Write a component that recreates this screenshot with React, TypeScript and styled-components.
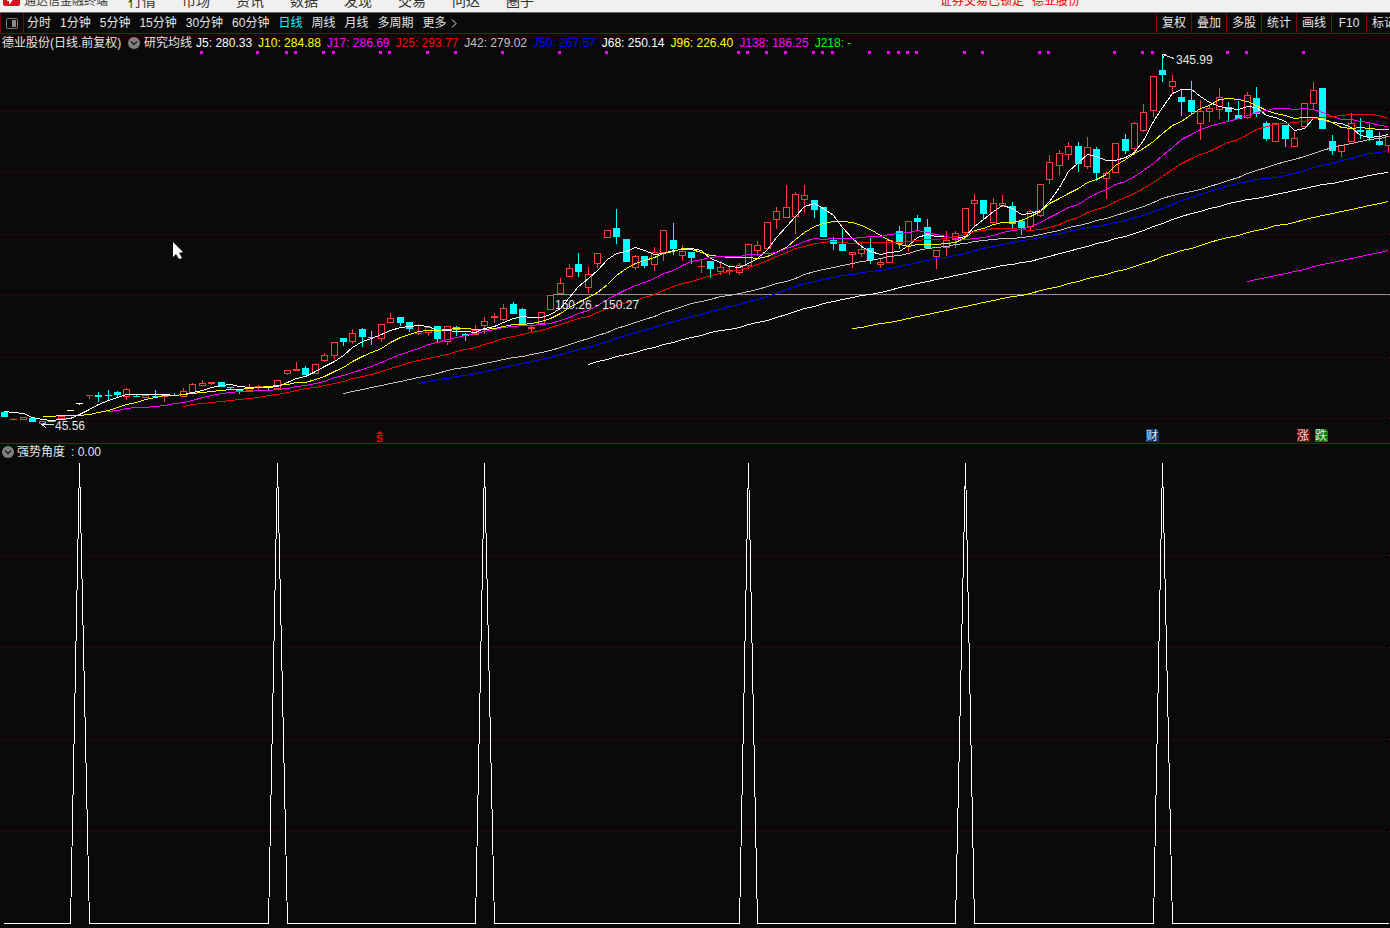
import React, { useState } from "react";
import styled, { createGlobalStyle } from "styled-components";

const GlobalStyle = createGlobalStyle`
  * { box-sizing: border-box; }
  body {
    margin: 0;
    background: #0a0a0a;
    color: #e4e4e4;
    font-family: "Liberation Sans", "Noto Sans CJK SC", sans-serif;
    font-size: 12px;
    line-height: 16px;
    overflow-x: hidden;
  }
  button { font: inherit; border: 0; padding: 0; background: none; cursor: pointer; }
`;

/* ---------- data ---------- */

type Kind = "u" | "d" | "w";
// kind, body top, body bottom, high, low
type Candle = [Kind, number, number, number, number];

const candles: Candle[] = [
  ["d", 412, 417, 412, 417], ["u", 419, 420, 418, 420], ["u", 417, 420, 417, 420], ["d", 418, 422, 418, 422],
  ["u", 421, 424, 421, 424], ["d", 421, 422, 421, 422], ["u", 416, 419, 416, 419], ["w", 410, 411, 410, 411],
  ["w", 403, 404, 403, 405], ["u", 395, 396, 395, 399], ["d", 395, 397, 392, 402], ["d", 395, 396, 390, 401],
  ["d", 392, 395, 391, 398], ["u", 389, 397, 388, 400], ["d", 396, 397, 394, 397], ["u", 395, 398, 395, 398],
  ["d", 396, 397, 390, 397], ["u", 395, 397, 395, 402], ["d", 395, 396, 393, 396], ["u", 391, 397, 388, 397],
  ["u", 384, 393, 383, 393], ["u", 383, 386, 380, 386], ["u", 382, 384, 382, 385], ["d", 382, 387, 382, 387],
  ["d", 387, 388, 387, 390], ["d", 390, 391, 389, 394], ["u", 388, 391, 384, 391], ["u", 386, 388, 385, 391],
  ["d", 386, 387, 386, 390], ["u", 380, 389, 380, 389], ["u", 370, 374, 370, 375], ["u", 369, 371, 362, 371],
  ["d", 368, 375, 366, 375], ["u", 364, 374, 364, 374], ["u", 355, 361, 353, 362], ["u", 342, 356, 342, 359],
  ["d", 338, 342, 338, 346], ["u", 333, 342, 329, 344], ["d", 329, 337, 328, 347], ["d", 337, 338, 331, 345],
  ["u", 324, 339, 324, 342], ["u", 318, 323, 313, 323], ["d", 317, 323, 317, 326], ["d", 322, 329, 322, 332],
  ["u", 333, 334, 324, 335], ["u", 327, 333, 327, 336], ["d", 326, 339, 326, 343], ["u", 326, 342, 326, 345],
  ["d", 327, 330, 326, 336], ["d", 334, 336, 333, 341], ["u", 330, 335, 325, 335], ["u", 321, 326, 317, 334],
  ["u", 316, 318, 313, 323], ["u", 308, 320, 304, 321], ["d", 304, 314, 302, 314], ["d", 309, 324, 308, 326],
  ["u", 327, 329, 325, 333], ["u", 312, 324, 312, 324], ["u", 295, 310, 295, 310], ["u", 283, 294, 278, 294],
  ["u", 268, 277, 264, 277], ["d", 264, 272, 253, 277], ["u", 274, 288, 267, 293], ["u", 253, 264, 253, 268],
  ["u", 230, 238, 230, 238], ["d", 228, 237, 209, 244], ["d", 239, 262, 239, 262], ["u", 256, 268, 255, 270],
  ["d", 256, 266, 256, 268], ["u", 252, 265, 247, 271], ["u", 230, 253, 230, 261], ["d", 240, 249, 223, 255],
  ["u", 251, 256, 245, 261], ["d", 252, 258, 252, 264], ["u", 266, 267, 260, 273], ["d", 261, 269, 261, 278],
  ["u", 267, 272, 261, 275], ["u", 270, 272, 265, 275], ["u", 265, 273, 263, 275], ["u", 244, 266, 244, 269],
  ["u", 245, 251, 241, 256], ["u", 222, 249, 222, 249], ["u", 211, 220, 207, 229], ["u", 207, 218, 185, 218],
  ["u", 194, 217, 192, 234], ["u", 195, 200, 185, 213], ["d", 200, 210, 200, 218], ["d", 207, 237, 207, 237],
  ["d", 240, 244, 237, 250], ["d", 244, 251, 229, 251], ["u", 252, 255, 252, 268], ["u", 249, 254, 242, 257],
  ["d", 248, 260, 238, 264], ["u", 262, 265, 258, 268], ["u", 240, 263, 240, 263], ["d", 231, 244, 226, 249],
  ["u", 221, 246, 221, 252], ["d", 218, 222, 215, 230], ["d", 227, 248, 219, 248], ["u", 250, 257, 250, 269],
  ["u", 240, 248, 231, 256], ["u", 233, 240, 231, 248], ["u", 208, 233, 208, 235], ["u", 200, 204, 194, 226],
  ["d", 200, 214, 200, 220], ["u", 203, 223, 198, 223], ["u", 203, 206, 195, 207], ["d", 206, 224, 202, 229],
  ["d", 221, 228, 221, 235], ["u", 211, 227, 210, 230], ["u", 184, 216, 184, 217], ["u", 162, 180, 155, 184],
  ["u", 153, 166, 150, 175], ["u", 146, 155, 142, 160], ["d", 146, 164, 142, 172], ["u", 147, 167, 137, 169],
  ["d", 149, 173, 147, 181], ["u", 173, 179, 171, 199], ["u", 143, 173, 143, 173], ["d", 139, 151, 134, 154],
  ["u", 123, 149, 122, 155], ["u", 112, 131, 104, 132], ["u", 76, 111, 76, 117], ["d", 70, 75, 54, 82],
  ["u", 81, 87, 75, 93], ["d", 97, 102, 90, 116], ["d", 100, 112, 81, 114], ["u", 111, 124, 100, 140],
  ["u", 108, 112, 104, 122], ["u", 97, 110, 88, 119], ["d", 107, 112, 102, 121], ["d", 115, 119, 101, 119],
  ["u", 95, 118, 92, 119], ["d", 98, 114, 87, 117], ["d", 123, 139, 121, 141], ["u", 123, 142, 123, 142],
  ["d", 125, 139, 125, 147], ["u", 138, 147, 132, 147], ["u", 103, 127, 103, 127], ["u", 90, 104, 82, 109],
  ["d", 88, 129, 88, 129], ["d", 141, 151, 135, 155], ["u", 145, 152, 145, 157], ["u", 123, 142, 113, 142],
  ["d", 130, 132, 118, 139], ["d", 130, 137, 124, 141], ["d", 141, 145, 132, 146], ["u", 136, 146, 136, 153],
];

// closes of the bars that lie left of the visible window
const earlierCloses = [424, 417, 411, 402, 410];
const closes = [...earlierCloses, ...candles.map(([k, top, bottom]) => (k === "d" ? bottom - 1 : top))];

const averages = [
  { period: 5, value: "280.33", color: "#ffffff" },
  { period: 10, value: "284.88", color: "#ffff00" },
  { period: 17, value: "286.69", color: "#ff00ff" },
  { period: 25, value: "293.77", color: "#ff0000" },
  { period: 42, value: "279.02", color: "#c0c0c0" },
  { period: 50, value: "267.57", color: "#0000ff" },
  { period: 68, value: "250.14", color: "#ffffff" },
  { period: 96, value: "226.40", color: "#ffff00" },
  { period: 138, value: "186.25", color: "#ff00ff" },
  { period: 218, value: "-", color: "#00ff00" },
];

const signalBars = [
  21, 27, 30, 31, 34, 35, 40, 41, 45, 48, 53, 59, 64, 78, 79, 81, 83, 86, 87, 88, 92, 94, 95, 96, 97, 102, 104, 110,
  111, 118, 121, 122, 130, 132, 138,
];
const spikeBars = [8, 29, 51, 79, 102, 123];

const menus = ["行情", "市场", "资讯", "数据", "发现", "交易", "问达", "圈子"];
const periods = ["分时", "1分钟", "5分钟", "15分钟", "30分钟", "60分钟", "日线", "周线", "月线", "多周期"];
const tools = ["复权", "叠加", "多股", "统计", "画线", "F10", "标记"];

const barX = (i: number) => Math.round(4 + 9.417 * i);

function averagePoints(period: number) {
  const points: string[] = [];
  for (let i = 0; i < candles.length; i++) {
    const end = i + earlierCloses.length + 1;
    if (end < period) continue;
    const sum = closes.slice(end - period, end).reduce((a, b) => a + b, 0);
    points.push(`${barX(i) + 0.5},${Math.round(sum / period) + 0.5}`);
  }
  return points.join(" ");
}

/* ---------- layout ---------- */

const Page = styled.div`
  display: flex;
  flex-direction: column;
  min-height: 100vh;
  overflow: hidden;
`;

const TitleBar = styled.header`
  display: flex;
  align-items: flex-end;
  height: 13px;
  padding: 0 0 4px 3px;
  overflow: hidden;
  background: #f0f0f0;
  border-bottom: 1px solid #6a6a6a;
  color: #333;
  line-height: 14px;
  white-space: nowrap;
`;

const AppName = styled.span`
  width: 108px;
  padding-left: 4px;
`;

const MenuBar = styled.nav`
  display: flex;
  gap: 26px;
  flex: 1;
  min-width: 0;
`;

const MenuButton = styled.button`
  color: #333;
  font-size: 14px;
  line-height: 14px;
`;

const LockNotice = styled.span`
  display: flex;
  gap: 8px;
  width: 450px;
  color: #ff0000;
`;

const Toolbar = styled.div`
  display: flex;
  height: 21px;
  border-bottom: 1px solid #800000;
  white-space: nowrap;
`;

const PanelToggle = styled.button`
  display: flex;
  align-items: center;
  justify-content: center;
  width: 24px;
  border-left: 1px solid #800000;
  border-right: 1px solid #800000;
`;

const Periods = styled.div`
  display: flex;
  gap: 9px;
  flex: 1;
  min-width: 0;
  padding-left: 3px;
`;

const PeriodButton = styled.button<{ $active?: boolean }>`
  display: flex;
  align-items: center;
  gap: 4px;
  color: ${(p) => (p.$active ? "#00ffff" : "#e4e4e4")};
`;

const Tools = styled.div`
  display: flex;
  width: 234px;
  overflow: hidden;
`;

const ToolButton = styled.button`
  flex: 0 0 35px;
  border-left: 1px solid #800000;
  color: #e4e4e4;
`;

const InfoRow = styled.div`
  display: flex;
  align-items: center;
  gap: 4px;
  height: 17px;
  padding-left: 2px;
  white-space: nowrap;
`;

const StockName = styled.span`
  min-width: 122px;
`;

const RoundButton = styled.button`
  display: flex;
`;

const Averages = styled.div`
  display: flex;
  gap: 6px;
`;

const AverageValue = styled.span<{ $color: string }>`
  color: ${(p) => p.$color};
`;

const IndicatorRow = styled(InfoRow)`
  gap: 3px;
  height: 18px;
  padding-bottom: 1px;
  border-top: 1px solid #800000;
`;

const IndicatorValue = styled.span`
  padding-left: 3px;
`;

const Chart = styled.svg`
  display: block;
  width: 100%;
  height: auto;
  text {
    font-family: "Liberation Sans", "Noto Sans CJK SC", sans-serif;
    font-size: 12px;
    fill: #e4e4e4;
  }
`;

/* ---------- drawings ---------- */

const Logo = () => (
  <svg width="17" height="14" viewBox="0 0 17 14" aria-hidden="true">
    <path d="M0 0 H17 V10 Q17 12 15 12 H2 Q0 12 0 10 Z" fill="#d4151b" />
    <path d="M4 0 H14 L7 10 L6 10 L6 7 L4 7 Z" fill="#f0f0f0" />
  </svg>
);

const PanelIcon = () => (
  <svg width="12" height="11" viewBox="0 0 12 11" aria-hidden="true">
    <rect x="0.5" y="0.5" width="11" height="10" rx="1.5" fill="none" stroke="#777" />
    <rect x="6" y="2" width="4" height="7" fill="#888" />
  </svg>
);

const MoreIcon = () => (
  <svg width="6" height="9" viewBox="0 0 6 9" aria-hidden="true">
    <path d="M1 0.5 L5 4.5 L1 8.5" fill="none" stroke="#e4e4e4" />
  </svg>
);

const RoundChevron = () => (
  <svg width="12" height="12" viewBox="0 0 12 12" aria-hidden="true">
    <circle cx="6" cy="6" r="6" fill="#808080" />
    <path d="M3 4.5 L6 7.5 L9 4.5" fill="none" stroke="#1c1c1c" strokeWidth="1.4" />
  </svg>
);

const GridLine = ({ y }: { y: number }) => (
  <line x1="1" x2="1390" y1={y + 0.5} y2={y + 0.5} stroke="#640c0c" strokeDasharray="1 3" shapeRendering="crispEdges" />
);

const candleColors = { u: "#ff3c3c", d: "#00ffff", w: "#ffffff" };

const CandleMark = ({ index, candle }: { index: number; candle: Candle }) => {
  const [kind, top, bottom, high, low] = candle;
  const x = barX(index);
  const color = candleColors[kind];
  const hollow = kind === "u" && bottom - top > 2;
  return (
    <g>
      <rect x={x} y={high} width="1" height={low - high} fill={color} />
      {hollow ? (
        <rect x={x - 2.5} y={top + 0.5} width="6" height={bottom - top - 1} fill="#0a0a0a" stroke={color} />
      ) : (
        <rect x={x - 3} y={top} width="7" height={bottom - top} fill={color} />
      )}
    </g>
  );
};

const EventTag = ({ x, fill, label }: { x: number; fill: string; label: string }) => (
  <g>
    <path d={`M${x} 429 h11 l2 2 v11 h-13 z`} fill={fill} />
    <text x={x} y="440">{label}</text>
  </g>
);

const PriceChart = () => (
  <Chart viewBox="0 51 1390 392" role="img" aria-label="日线">
    {[111, 172, 234, 295, 357, 418].map((y) => <GridLine key={y} y={y} />)}
    <g shapeRendering="crispEdges">
      {signalBars.map((i) => <rect key={i} x={barX(i) - 2} y="51" width="3" height="3" fill="#ff00ff" />)}
      {candles.map((c, i) => <CandleMark key={i} index={i} candle={c} />)}
      <line x1="553" x2="1390" y1="294.5" y2="294.5" stroke="#909090" />
      {averages.map((a) => (
        <polyline key={a.period} points={averagePoints(a.period)} fill="none" stroke={a.color} />
      ))}
    </g>
    <g fill="none" stroke="#e4e4e4" shapeRendering="crispEdges">
      <path d="M1162.5 54.5 L1174 58.5 M1166 54.5 H1162.5 L1163.5 58" />
      <path d="M42 424.5 H54 M46 422.5 L42 424.5 L46 427.5" />
    </g>
    <text x="1176" y="64">345.99</text>
    <text x="55" y="430">45.56</text>
    <text x="555" y="309">150.26 - 150.27</text>
    <path d="M377 434 L380 431 L383 434 Z" fill="#ff0000" />
    <path d="M382 436.5 V435.5 H378.5 L377.5 436.5 V437.5 L382 438.5 V440.5 L381 441.5 H377.5 V440" fill="none" stroke="#ff0000" strokeWidth="1.4" />
    <EventTag x={1146} fill="#063a70" label="财" />
    <EventTag x={1297} fill="#800000" label="涨" />
    <EventTag x={1315} fill="#008000" label="跌" />
    <path d="M173 242 V257 L176 254 L179 259 L182 258 L179 253 L183 252 Z" fill="#ffffff" />
  </Chart>
);

const AngleChart = () => {
  const points = candles.map((_, i) => `${barX(i) + 0.5},${spikeBars.includes(i) ? 463 : 923.5}`).join(" ");
  return (
    <Chart viewBox="0 461 1390 467" role="img" aria-label="强势角度">
      {[555, 647, 739, 831].map((y) => <GridLine key={y} y={y} />)}
      <polyline points={points} fill="none" stroke="#ffffff" strokeMiterlimit="1" strokeLinecap="square" shapeRendering="crispEdges" />
    </Chart>
  );
};

export default function App() {
  const [period, setPeriod] = useState("日线");
  return (
    <Page>
      <GlobalStyle />
      <TitleBar>
        <Logo />
        <AppName>通达信金融终端</AppName>
        <MenuBar>
          {menus.map((m) => <MenuButton key={m}>{m}</MenuButton>)}
        </MenuBar>
        <LockNotice>
          <span>证券交易已锁定</span>
          <span>德业股份</span>
        </LockNotice>
      </TitleBar>
      <Toolbar>
        <PanelToggle aria-label="侧栏"><PanelIcon /></PanelToggle>
        <Periods>
          {periods.map((p) => (
            <PeriodButton key={p} $active={p === period} onClick={() => setPeriod(p)}>{p}</PeriodButton>
          ))}
          <PeriodButton>更多<MoreIcon /></PeriodButton>
        </Periods>
        <Tools>
          {tools.map((t) => <ToolButton key={t}>{t}</ToolButton>)}
        </Tools>
      </Toolbar>
      <InfoRow>
        <StockName>德业股份(日线.前复权)</StockName>
        <RoundButton aria-label="指标菜单"><RoundChevron /></RoundButton>
        <span>研究均线</span>
        <Averages>
          {averages.map((a) => (
            <AverageValue key={a.period} $color={a.color}>J{a.period}: {a.value}</AverageValue>
          ))}
        </Averages>
      </InfoRow>
      <PriceChart />
      <IndicatorRow>
        <RoundButton aria-label="副图菜单"><RoundChevron /></RoundButton>
        <span>强势角度</span>
        <IndicatorValue>: 0.00</IndicatorValue>
      </IndicatorRow>
      <AngleChart />
    </Page>
  );
}
